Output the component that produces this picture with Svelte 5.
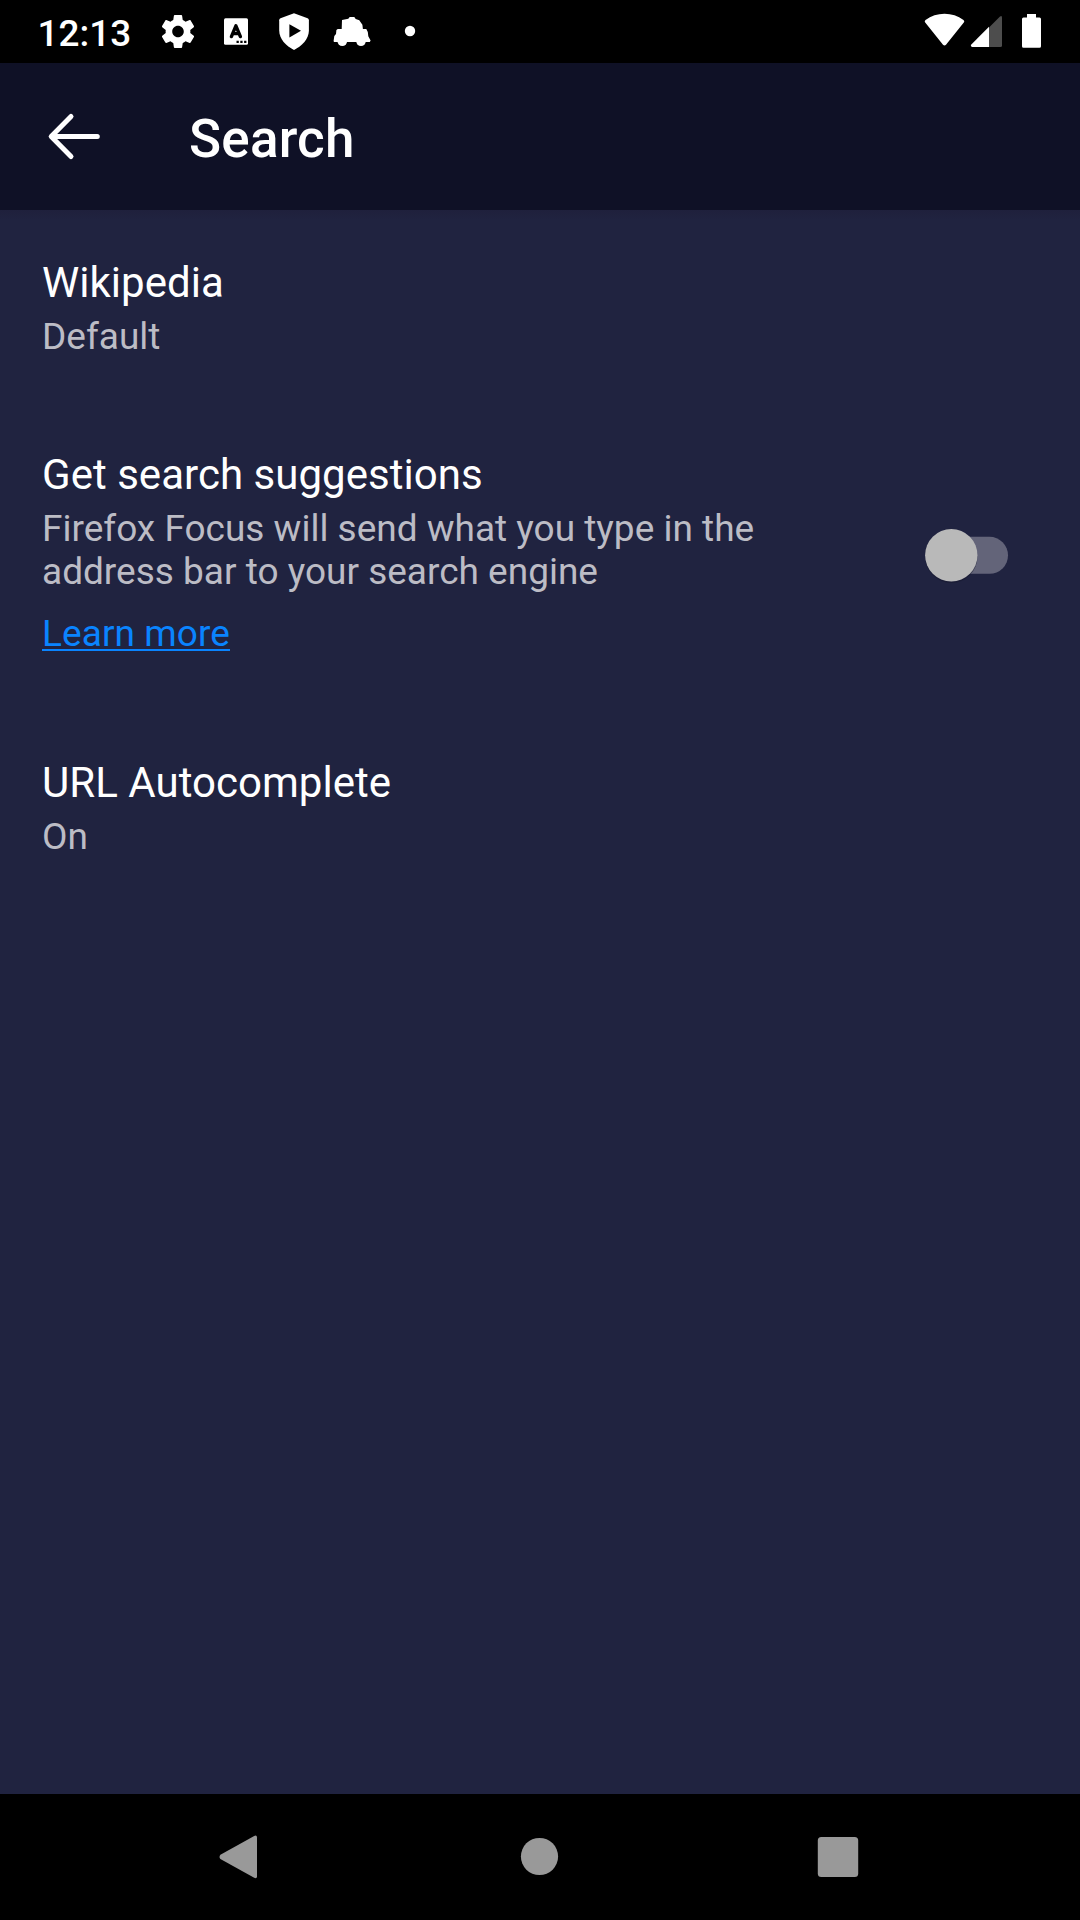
<script>
  const notifications = ['settings', 'keyboard', 'protect', 'car', 'more'];
</script>

<div class="screen">
  <header class="status">
    <span class="clock">12:13</span>
    {#each notifications as name}
      <svg class="note" viewBox="0 0 58 63" aria-hidden="true">
        {#if name === 'settings'}
          <path transform="translate(9.2 11.7) scale(1.65)" fill-rule="evenodd" d="M19.43 12.98c.04-.32.07-.64.07-.98s-.03-.66-.07-.98l2.11-1.65c.19-.15.24-.42.12-.64l-2-3.46c-.12-.22-.39-.3-.61-.22l-2.49 1c-.52-.4-1.08-.73-1.69-.98l-.38-2.65C14.46 2.18 14.25 2 14 2h-4c-.25 0-.46.18-.49.42l-.38 2.65c-.61.25-1.17.59-1.69.98l-2.49-1c-.23-.09-.49 0-.61.22l-2 3.46c-.13.22-.07.49.12.64l2.11 1.65c-.04.32-.07.65-.07.98s.03.66.07.98l-2.11 1.65c-.19.15-.24.42-.12.64l2 3.46c.12.22.39.3.61.22l2.49-1c.52.4 1.08.73 1.69.98l.38 2.65c.03.24.24.42.49.42h4c.25 0 .46-.18.49-.42l.38-2.65c.61-.25 1.17-.59 1.69-.98l2.49 1c.23.09.49 0 .61-.22l2-3.46c.12-.22.07-.49-.12-.64l-2.11-1.65zM12 15.5c-1.93 0-3.5-1.57-3.5-3.5s1.57-3.5 3.5-3.5 3.5 1.57 3.5 3.5-1.57 3.5-3.5 3.5z" />
        {:else if name === 'keyboard'}
          <rect x="17" y="18.3" width="24" height="26.5" rx="1.5" />
          <path class="cut" d="M24.4 36.6 28.9 25.8 33.4 36.6M26 33.6h6" />
          <path class="hole" d="M29.5 40.8h2.3v2.3h-2.3zM33.3 40.8h2.3v2.3h-2.3zM37.1 40.8h2.3v2.3h-2.3z" />
        {:else if name === 'protect'}
          <path d="M29 13.3 42.6 18.2Q43.9 18.7 43.9 20.2V30.5C43.9 38.8 37 46.3 29 49.9 21 46.3 14.2 38.8 14.2 30.5V20.2Q14.2 18.7 15.5 18.2Z" />
          <path class="hole" d="M24.4 24.2V37.4L36 30.8Z" />
        {:else if name === 'car'}
          <path d="M19 20 25.3 18.8 26.7 17H31.3L32.7 19 36.3 20.2 39.4 24.7 39.9 29H43.3L44.8 32 45.3 36.3 47.6 40.6 46.8 42H11L10.6 41 11.3 36 13 34 13.4 30 14.8 29H18.7Z" />
          <circle cx="19.3" cy="41.3" r="4.8" />
          <circle cx="38" cy="41.3" r="4.8" />
        {:else}
          <circle cx="29" cy="31" r="5.2" />
        {/if}
      </svg>
    {/each}
    <span class="spacer"></span>
    <svg class="system" viewBox="916 0 138 63" aria-hidden="true">
      <path d="M925.2 22.5Q924 21 925.5 20A32 32 0 0 1 963.5 20Q965 21 963.8 22.5L946 44.8Q944.5 46.4 943 44.8Z" />
      <path class="dim" d="M989 27.5 1000 16.5Q1002 15 1002 17.5V45.5Q1002 47 1000.5 47H989Z" />
      <path d="M989 26.8V47H972.2Q970 46.6 971.3 44.6Z" />
      <path d="M1027 14H1036V17.5H1039.5Q1041 17.5 1041 19V46.3Q1041 47.8 1039.5 47.8H1023.5Q1022 47.8 1022 46.3V19Q1022 17.5 1023.5 17.5H1027Z" />
    </svg>
  </header>

  <div class="toolbar">
    <svg class="back" viewBox="0 0 147 147" role="img" aria-label="Back">
      <path d="M71 53.5 51.2 73.5 71 93.5M52 73.5H97.3" />
    </svg>
    <h1>Search</h1>
  </div>

  <main>
    <section class="item">
      <div class="copy">
        <h2>Wikipedia</h2>
        <p>Default</p>
      </div>
    </section>
    <section class="item tall">
      <div class="copy">
        <h2>Get search suggestions</h2>
        <p>Firefox Focus will send what you type in the<br />address bar to your search engine</p>
        <a href="#learn">Learn more</a>
      </div>
      <svg class="switch" viewBox="915 509 103 93" role="img" aria-label="Off">
        <rect class="track" x="934" y="536.8" width="74" height="37" rx="18.5" />
        <circle class="shade" cx="951.3" cy="556.8" r="26.2" />
        <circle class="thumb" cx="951.3" cy="555.2" r="26.2" />
      </svg>
    </section>
    <section class="item">
      <div class="copy">
        <h2>URL Autocomplete</h2>
        <p>On</p>
      </div>
    </section>
  </main>

  <nav>
    <svg viewBox="0 0 1080 126" aria-hidden="true">
      <path d="M220.4 60.7 254.2 41.9Q257 40.8 257 43.5V82.3Q257 85 254.2 83.8L220.4 65Q218.6 63 220.4 60.7Z" />
      <circle cx="539.5" cy="62.5" r="18.6" />
      <rect x="817.8" y="43" width="40.4" height="40" rx="3.5" />
    </svg>
  </nav>
</div>

<style>
  :global(body) {
    margin: 0;
    background: #000;
  }
  .screen {
    display: flex;
    flex-direction: column;
    width: 1080px;
    height: 1920px;
    overflow: hidden;
    background: #202340;
    color: #fff;
    font-family: Roboto, sans-serif;
  }
  h1, h2, p {
    margin: 0;
  }
  .status {
    display: flex;
    align-items: center;
    flex: none;
    height: 63px;
    background: #000;
  }
  .clock {
    box-sizing: border-box;
    width: 149px;
    padding: 3px 0 0 37.5px;
    font-size: 36.9px;
    line-height: 43px;
    font-weight: 500;
  }
  .note {
    width: 58px;
    height: 63px;
    fill: #fff;
  }
  .cut {
    fill: none;
    stroke: #000;
    stroke-width: 3.4;
    stroke-linecap: round;
    stroke-linejoin: round;
  }
  .hole {
    fill: #000;
  }
  .spacer {
    flex: 1;
  }
  .system {
    width: 138px;
    height: 63px;
    margin-right: 26px;
    fill: #fff;
  }
  .dim {
    fill: #4d4d4d;
  }
  .toolbar {
    display: flex;
    align-items: center;
    flex: none;
    height: 147px;
    background: #0f1126;
  }
  .back {
    width: 147px;
    height: 147px;
    margin-right: 42px;
    fill: none;
    stroke: #fff;
    stroke-width: 5;
    stroke-linecap: round;
    stroke-linejoin: round;
  }
  h1 {
    padding-top: 4px;
    font-size: 53px;
    line-height: 62px;
    font-weight: 500;
    letter-spacing: 0.2px;
  }
  main {
    flex: 1;
    background: linear-gradient(#1f203c, #202340 10px);
  }
  .item {
    box-sizing: border-box;
    display: flex;
    justify-content: space-between;
    height: 192px;
    padding: 48px 62px 0 42px;
  }
  .item.tall {
    height: 308px;
  }
  h2 {
    font-size: 42px;
    line-height: 49px;
    font-weight: 400;
    letter-spacing: 0.03px;
  }
  p {
    margin-top: 8px;
    color: #bcbcc5;
    font-size: 37px;
    line-height: 43px;
  }
  a {
    display: block;
    width: max-content;
    margin-top: 19px;
    color: #0a84ff;
    font-size: 37px;
    line-height: 43px;
    letter-spacing: 0.08px;
    text-decoration: underline;
    text-decoration-thickness: 2px;
    text-underline-offset: 3px;
    text-decoration-skip-ink: none;
  }
  .switch {
    width: 103px;
    height: 93px;
    margin-top: 59px;
  }
  .track {
    fill: #636479;
  }
  .shade {
    fill: #15172d;
    opacity: 0.5;
  }
  .thumb {
    fill: #b9b9b9;
  }
  nav {
    flex: none;
    height: 126px;
    background: #000;
  }
  nav svg {
    display: block;
    width: 1080px;
    height: 126px;
    fill: #999;
  }
</style>
